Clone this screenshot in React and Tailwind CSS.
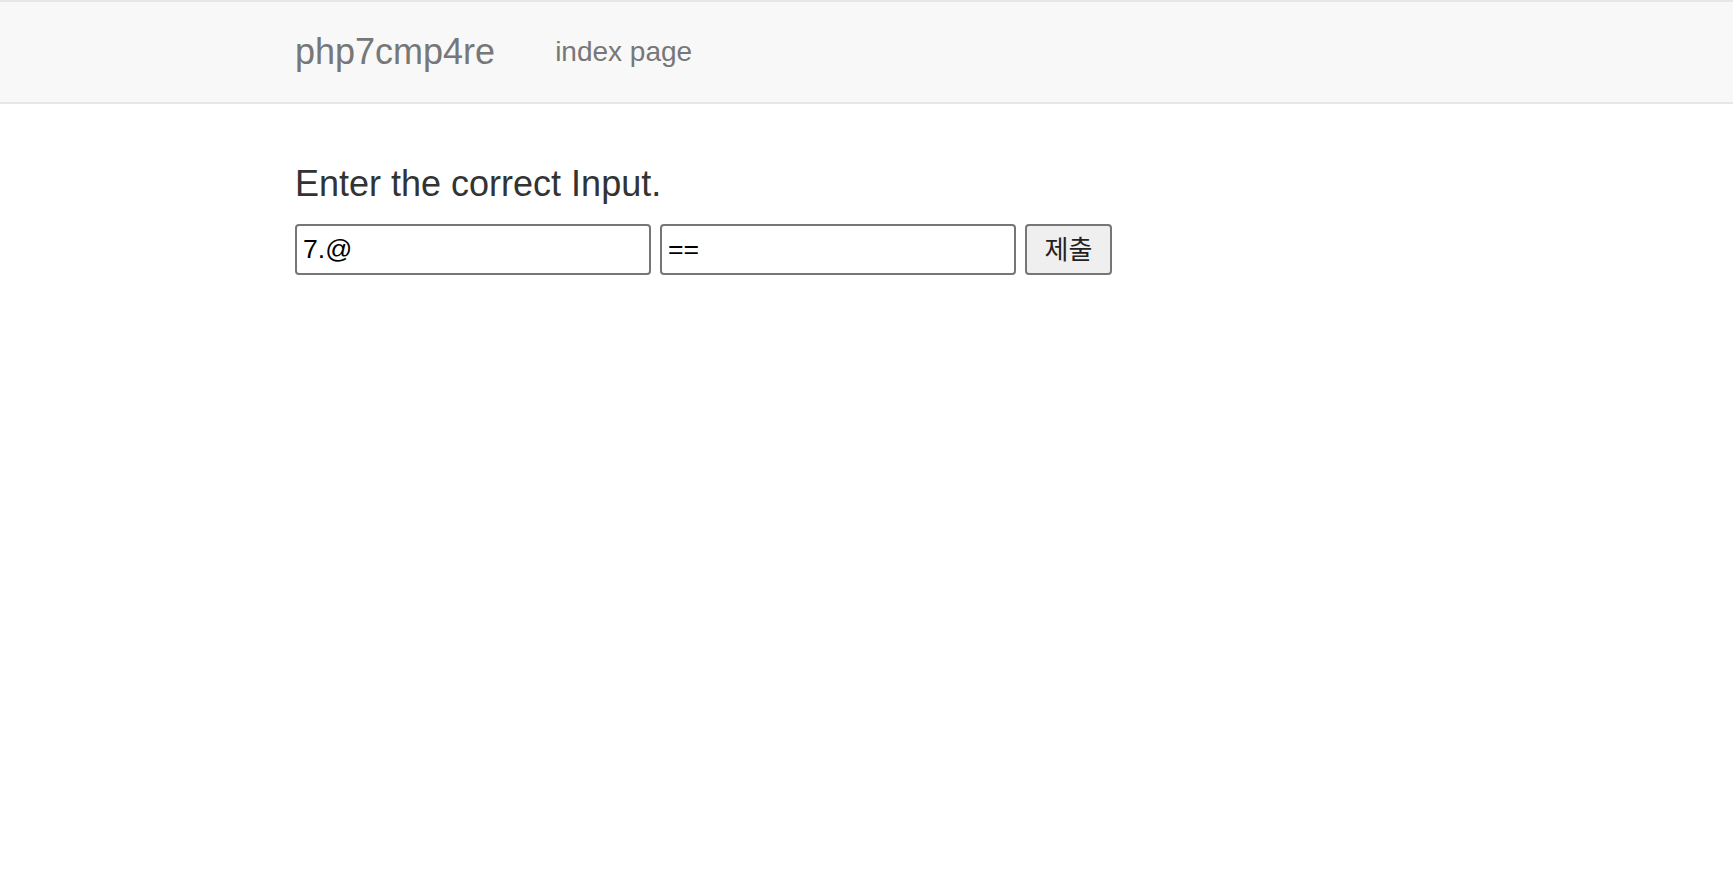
import { useState } from "react";

const App = () => {
  const [first, setFirst] = useState("7.@");
  const [second, setSecond] = useState("==");

  return (
    <div className="min-h-screen bg-white font-['Liberation_Sans',Arial,sans-serif]">
      {/* navbar */}
      <nav className="h-[104px] border-y-2 border-[#e7e7e7] bg-[#f8f8f8]">
        <div className="mx-auto flex h-full w-[1203px] items-center px-[30px]">
          <a href="#" className="text-[36px] leading-[40px] text-[#777]">
            php7cmp4re
          </a>
          <a href="#" className="ml-[60px] text-[28px] leading-[40px] text-[#777]">
            index page
          </a>
        </div>
      </nav>

      {/* content */}
      <div className="mx-auto w-[1203px] px-[30px] pt-[60px]">
        <h4 className="text-[36px] leading-[1.1] text-[#333]">Enter the correct Input.</h4>
        <form
          className="mt-[20px] flex items-center gap-[9px]"
          onSubmit={(e) => e.preventDefault()}
        >
          <input
            type="text"
            value={first}
            onChange={(e) => setFirst(e.target.value)}
            className="h-[51px] w-[356px] rounded-[4px] border-2 border-[#767676] bg-white px-[6px] text-[26.67px] text-black outline-none"
          />
          <input
            type="text"
            value={second}
            onChange={(e) => setSecond(e.target.value)}
            className="h-[51px] w-[356px] rounded-[4px] border-2 border-[#767676] bg-white px-[6px] text-[26.67px] text-black outline-none"
          />
          <button
            type="submit"
            className="h-[51px] w-[87px] rounded-[4px] border-2 border-[#767676] bg-[#efefef] pb-[3px] text-[26px] text-[#222] font-['Noto_Sans_CJK_KR',sans-serif] leading-none"
          >
            제출
          </button>
        </form>
      </div>
    </div>
  );
};

export default App;
